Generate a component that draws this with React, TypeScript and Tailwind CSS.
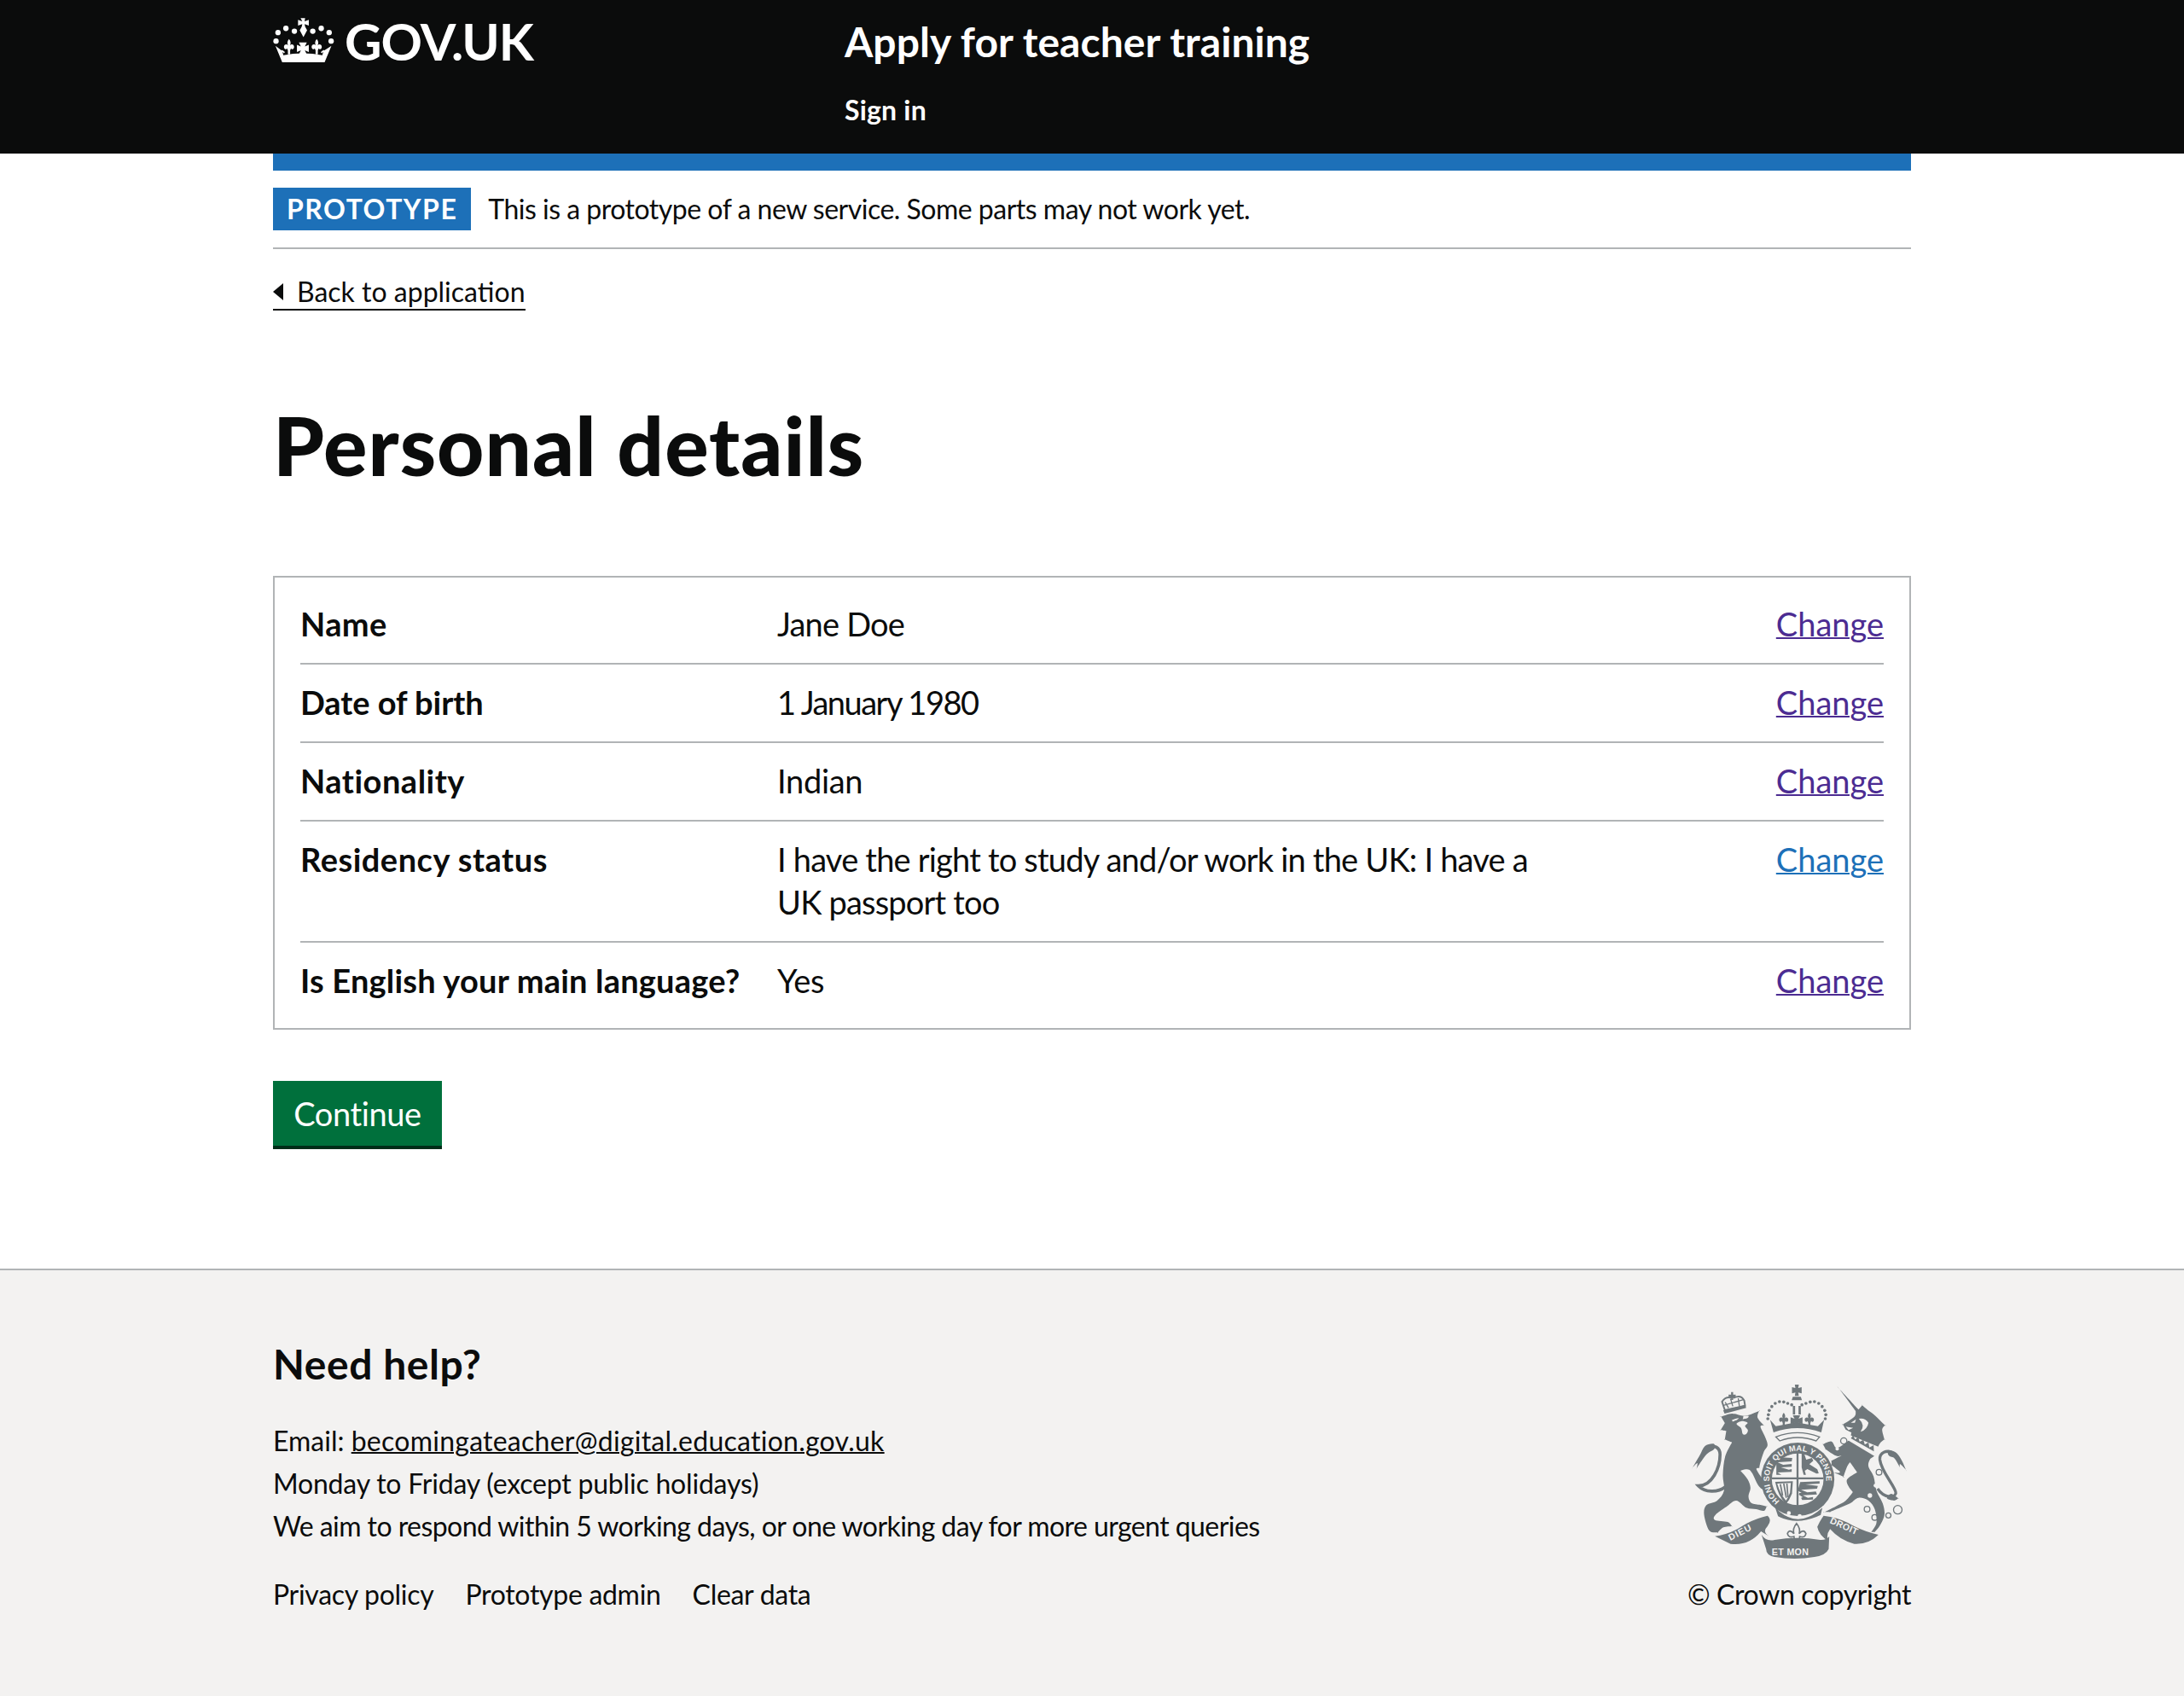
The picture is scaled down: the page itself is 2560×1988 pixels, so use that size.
import React from "react";

const G = "#6f777b";
const BG = "#f3f2f1";

// Closed smooth outline through points; a point written with "!" stays a sharp corner.
function S(s: string) {
  const pts: number[][] = [];
  s.trim().split(/\s+/).forEach((t) => {
    const sharp = t.endsWith("!");
    const [x, y] = t.replace("!", "").split(",").map(Number);
    pts.push([x, y]);
    if (sharp) pts.push([x, y]);
  });
  const n = pts.length;
  let d = `M${pts[0][0]} ${pts[0][1]}`;
  for (let i = 0; i < n; i++) {
    const p0 = pts[(i - 1 + n) % n], p1 = pts[i], p2 = pts[(i + 1) % n], p3 = pts[(i + 2) % n];
    d += `C${(p1[0] + (p2[0] - p0[0]) / 6).toFixed(1)} ${(p1[1] + (p2[1] - p0[1]) / 6).toFixed(1)} ${(p2[0] - (p3[0] - p1[0]) / 6).toFixed(1)} ${(p2[1] - (p3[1] - p1[1]) / 6).toFixed(1)} ${p2[0]} ${p2[1]}`;
  }
  return d + "Z";
}

const FLEUR = "M0-28C7-20 7-12 3-6 8-12 18-10 18 0 18 8 10 10 7 5L4 12 4 26-4 26-4 12-7 5C-10 10-18 8-18 0-18-10-8-12-3-6-7-12-7-20 0-28Z";

function Crown() {
  return (
    <svg viewBox="30 30 216 160" className="w-[72px] h-[53px] shrink-0" fill="#fff">
      <path d="M127 34h16l-2 11 9-3 6-2v20l-6-2-9-3 2 9 7 13-13 24-13-24 7-13 2-9-9 3-6 2V40l6 2 9 3z" />
      {[[40,115],[47,85],[75,70],[105,80],[170,80],[200,70],[228,85],[235,115]].map(([x,y],i)=>(
        <circle key={i} cx={x} cy={y} r="9.5" />
      ))}
      <path d="M38 132L62 150 66 165Q135 152 204 165L208 150 236 132 212 190H62Z" />
      <path transform="translate(86 136)" d={FLEUR} />
      <path transform="translate(184 136)" d={FLEUR} />
      <path d="M121 120h28l-7 14 14-6v26l-14-6 7 14h-28l7-14-14 6v-26l14 6z" />
      <path d="M60 148l10 8M210 148l-10 8" stroke="#fff" strokeWidth="5" />
    </svg>
  );
}

function Crest() {
  const ring = { fill: "none", stroke: G, strokeWidth: 4 };
  return (
    <svg viewBox="60 60 770 630" className="w-[257px] h-[210px] block">
      <defs>
        <path id="garterTop" d="M384 487 A100 100 0 1 1 498 487" />
      </defs>
      <g fill={G}>
        {/* lion */}
        <g transform="translate(60 60)">
          <path d={S("112,125! 150,114 195,122 245,105! 240,128 262,155! 250,160 266,195 275,225 262,248 250,285 246,305! 236,310 258,345 280,372! 270,385 245,370 222,325 212,312! 198,310 180,315! 205,345 215,375 208,405 218,428 250,435 272,440! 262,456 235,450 200,445 165,420 130,442 92,470 90,488 135,495 150,510! 120,514 100,532! 70,525 52,470 60,436 98,420 122,385 118,330 126,265 150,215! 125,205! 130,175! 110,172! 125,147!")} />
          <path d="M126 372C100 392 55 392 32 368C80 368 108 305 108 258C108 234 88 222 66 232" fill="none" stroke={G} strokeWidth="11" />
          <path d={S("85,220 55,228 36,262 12,303! 28,288 26,306! 42,282 62,256 88,238")} />
          <path d={S("150,136! 172,130 168,136 152,142!")} fill={BG} />
          <path d={S("190,124! 208,122 204,130 188,134!")} fill={BG} />
          <path d={S("166,150 185,140 205,146 196,158 206,172 200,186 188,186 182,165")} fill={BG} />
          <path d="M125 102L115 72Q128 54 145 58Q150 48 157 58Q182 46 193 68L196 86Z" fill="none" stroke={G} strokeWidth="6" />
          <path d="M126 74l12 20M145 62l8 26M172 60l4 28M120 85l70-20" fill="none" stroke={G} strokeWidth="4" />
          <path d="M119 103L196 84 200 94 124 114Z" />
          <path d="M147 38h7v28h-7zM138 47h25v7h-25z" />
        </g>

        {/* unicorn */}
        <g transform="translate(450 60)">
          <path d={S("138,28! 205,100! 218,85! 238,102 262,120 298,155! 288,170 296,205! 278,222 262,260 245,275 240,300 258,335 268,385 290,430 296,470 280,508 262,530! 250,530! 268,498 262,450 240,420 205,410 175,430 140,445 105,460! 85,460! 125,440 160,420 185,390! 170,370 165,345 200,320! 175,285! 165,300 152,336! 120,322! 140,320 110,295! 110,280! 145,262! 125,262 90,240! 80,222! 110,212 130,235 175,205! 180,180! 160,170! 150,152! 190,125 195,105!")} />
          <path d="M272 378C295 412 332 412 336 394C338 374 285 320 280 276C278 250 305 240 325 252" fill="none" stroke={G} strokeWidth="10" />
          <path d={S("308,243 335,250 355,275 372,312! 352,292 350,302! 332,272 312,262")} />
          <path d={S("320,396 345,412! 330,420 305,412")} />
          <path d="M172 188L278 232 262 264 168 208Z" fill={BG} />
          <path d="M178 201L186 190 193 205 204 197 209 213 222 206 227 223 240 215 243 233 258 225 259 247Z" />
          <circle cx="265" cy="367" r="7" fill={BG} />
          <circle cx="245" cy="402" r="8" fill={BG} />
          <circle cx="130" cy="238" r="6" fill={BG} />
          <path d="M206 132Q228 128 240 146Q236 170 212 178Q230 155 206 132Z" fill={BG} />
          <path d="M178 146L196 134 192 146Z M160 160L186 164 170 172Z" fill={BG} />
          <g {...ring}>
            <circle cx="153" cy="210" r="11" />
            <circle cx="143" cy="295" r="11" />
            <circle cx="277" cy="320" r="10" />
            <circle cx="235" cy="450" r="10" />
            <circle cx="262" cy="479" r="10" />
            <circle cx="310" cy="472" r="9" />
            <circle cx="343" cy="452" r="15" />
          </g>
        </g>

        {/* royal crown */}
        <path d="M431 72h14l-2 12 12-3v22l-12-3 2 12h-14l2-12-12 3V81l12 3z" />
        <path d="M424 115h28l4 12h-36z" />
        <path d="M424 147h8v30h-8zM444 147h8v30h-8z" />
        {[[338,178],[336,192],[341,163],[350,149],[362,138],[377,132],[392,133],[406,138],[420,143],[456,143],[470,138],[485,133],[500,132],[515,138],[527,149],[536,163],[540,178],[538,192]].map(([x,y],i)=>(
          <circle key={i} cx={x} cy={y} r="5.5" />
        ))}
        <path d="M344 196L364 218 436 205 512 218 534 196 524 240Q440 210 356 240Z" />
        <path transform="translate(392 196) scale(.9)" d={FLEUR} />
        <path transform="translate(482 196) scale(.9)" d={FLEUR} />
        <path d="M424 180h26l-6 12 14-5v24l-14-5 6 12h-26l6-12-14 5v-24l14 5z" />
        <path d="M364 256Q440 226 518 256L506 270Q440 246 378 270Z" fill="none" stroke={G} strokeWidth="4" />

        {/* garter and shield */}
        <circle cx="441" cy="405" r="129" />
        <circle cx="441" cy="405" r="91" fill={BG} />
        <path d="M437 312h7v190h-7zM350 398h182v7H350z" />
        <path d="M366 328l58-20v6l-42 14 40 2-2 12-50 3 20 9 30-3v10l-38 2 28 8 10-2v10l-50 2 14 8h-18z" />
        <path d="M455 312h8l8 24 20-6 5 10-14 12 28 18 5 14-8 1-32-16-9 6 4 14h-8l-7-26z" />
        <path d="M362 414L424 412 421 455Q412 478 400 492 372 465 362 414Z" />
        <path d="M369 420L417 418 414 452Q408 468 400 480 380 458 369 420Z" fill={BG} />
        <path d="M380 422l8 40M392 420l9 50M403 420l4 48" fill="none" stroke={G} strokeWidth="5" />
        <path d="M450 415l68-3v8l-50 3 44 5-3 10-56 4 22 9 30-3 4 10-50 3 18 9 18-3v9l-38 2-4-8 6-2-14-9 2-6h8l-14-8z" />
        <text fontFamily="Liberation Sans, sans-serif" fontWeight="700" fontSize="28" fill={BG} letterSpacing="0.5">
          <textPath href="#garterTop" startOffset="8">HONI SOIT QUI MAL Y PENSE</textPath>
        </text>
        <path d="M362 505Q440 585 528 505L522 530Q440 570 372 535Z" />
        <circle cx="410" cy="524" r="7" fill={BG} />
        <circle cx="448" cy="534" r="7" fill={BG} />

        {/* fleur under the shield */}
        <path d="M437 560Q452 578 446 596 462 578 470 596 468 612 448 606L446 620 456 632H420L430 620 428 606Q408 612 405 596 412 578 428 596 422 578 437 560Z" fill="none" stroke={G} strokeWidth="5" />

        {/* motto ribbons */}
        <path d="M150 605Q200 600 245 570 285 545 335 533 352 548 335 570 315 590 340 605L312 588Q270 640 205 632Z" />
        <path d="M510 572Q520 550 532 533 590 540 640 570 680 590 725 600 690 635 640 632 590 620 555 580 540 600 548 622 515 600 510 572Z" />
        <path d="M314 600Q330 625 360 618 440 605 520 618 540 620 552 606L550 650Q540 672 500 678 430 690 360 678 330 672 330 650Z" />
        <g fontFamily="Liberation Sans, sans-serif" fontWeight="700" fill={BG} fontSize="32">
          <text x="204" y="621" transform="rotate(-27 204 621)" letterSpacing="3">DIEU</text>
          <text x="350" y="672" letterSpacing="1">ET MON</text>
          <text x="552" y="558" transform="rotate(24 552 558)" letterSpacing="1">DROIT</text>
        </g>
      </g>
    </svg>
  );
}

const rows: { k: string; kt: string; v: string; t: string; active?: boolean }[] = [
  { k: "Name", kt: "tracking-[0.4px]", v: "Jane Doe", t: "tracking-[-0.8px]" },
  { k: "Date of birth", kt: "tracking-[-0.05px]", v: "1 January 1980", t: "tracking-[-1.5px]" },
  { k: "Nationality", kt: "tracking-[0.5px]", v: "Indian", t: "tracking-[-0.3px]" },
  { k: "Residency status", kt: "tracking-[0.5px]", v: "I have the right to study and/or work in the UK: I have a UK passport too", t: "tracking-[-0.8px]", active: true },
  { k: "Is English your main language?", kt: "tracking-[0.2px]", v: "Yes", t: "tracking-[-0.3px]" },
];

export default function App() {
  return (
    <div className="min-h-[1988px] flex flex-col bg-white text-[#0b0c0c] font-['Lato',sans-serif]">
      <header className="bg-[#0b0c0c] h-[180px] text-white">
        <div className="w-[1920px] mx-auto flex">
          <div className="w-[670px] pt-[20px] flex items-start gap-[12px]">
            <Crown />
            <span className="text-[60px] leading-[56px] font-bold tracking-[-1px]">GOV.UK</span>
          </div>
          <div className="pt-[24px]">
            <div className="text-[48px] leading-[50px] font-bold tracking-[0.05px]">Apply for teacher training</div>
            <div className="mt-[35px] text-[32px] leading-[40px] font-bold tracking-[0.2px]">Sign in</div>
          </div>
        </div>
      </header>

      <main className="w-[1920px] mx-auto">
        <div className="h-[20px] bg-[#1d70b8]" />
        <div className="py-[20px] border-b-2 border-[#b1b4b6] flex items-center gap-[20px]">
          <span className="h-[50px] px-[16px] bg-[#1d70b8] text-white text-[32px] leading-[50px] font-bold tracking-[1.5px]">PROTOTYPE</span>
          <span className="text-[32px] leading-[40px] tracking-[-0.5px]">This is a prototype of a new service. Some parts may not work yet.</span>
        </div>

        <a className="mt-[30px] inline-flex items-center gap-[16px] h-[42px] border-b-2 border-[#0b0c0c] text-[32px] leading-[40px]">
          <span className="w-0 h-0 border-y-[10px] border-y-transparent border-r-[12px] border-r-[#0b0c0c]" />
          Back to application
        </a>

        <h1 className="mt-[107px] text-[96px] leading-[100px] font-black tracking-[1px]">Personal details</h1>

        <div className="mt-[104px] border-2 border-[#b1b4b6] px-[30px] py-[10px]">
          {rows.map((r, i) => (
            <div key={r.k} className={`flex pt-[19px] pb-[21px] text-[38px] leading-[50px] ${i < rows.length - 1 ? "border-b-2 border-[#b1b4b6]" : ""}`}>
              <div className={`w-[559px] shrink-0 font-bold ${r.kt}`}>{r.k}</div>
              <div className={`w-[900px] shrink-0 ${r.t}`}>{r.v}</div>
              <a className={`ml-auto underline decoration-2 ${r.active ? "text-[#1d70b8]" : "text-[#4c2c92]"}`}>Change</a>
            </div>
          ))}
        </div>

        <button className="mt-[60px] block h-[80px] w-[198px] bg-[#00703c] border-b-4 border-[#002d18] text-white text-[38px] leading-[50px] tracking-[-0.4px]">Continue</button>
      </main>

      <footer className="mt-[140px] flex-1 bg-[#f3f2f1] border-t-2 border-[#b1b4b6]">
        <div className="w-[1920px] mx-auto flex justify-between items-end pb-[70px]">
          <div>
            <h2 className="mt-[80px] text-[48px] leading-[60px] font-bold tracking-[0.55px]">Need help?</h2>
            <div className="mt-[35px] text-[32px] leading-[50px]">
              <div>Email: <a className="underline decoration-2 tracking-[0.25px]">becomingateacher@digital.education.gov.uk</a></div>
              <div className="tracking-[-0.2px]">Monday to Friday (except public holidays)</div>
              <div className="tracking-[-0.56px]">We aim to respond within 5 working days, or one working day for more urgent queries</div>
            </div>
            <div className="mt-[30px] flex gap-[37px] text-[32px] leading-[50px] tracking-[-0.3px]">
              <a>Privacy policy</a>
              <a>Prototype admin</a>
              <a>Clear data</a>
            </div>
          </div>
          <div className="flex flex-col items-end">
            <div className="mr-[3px] mb-[15px]"><Crest /></div>
            <div className="text-[32px] leading-[50px] tracking-[-0.38px]">© Crown copyright</div>
          </div>
        </div>
      </footer>
    </div>
  );
}
